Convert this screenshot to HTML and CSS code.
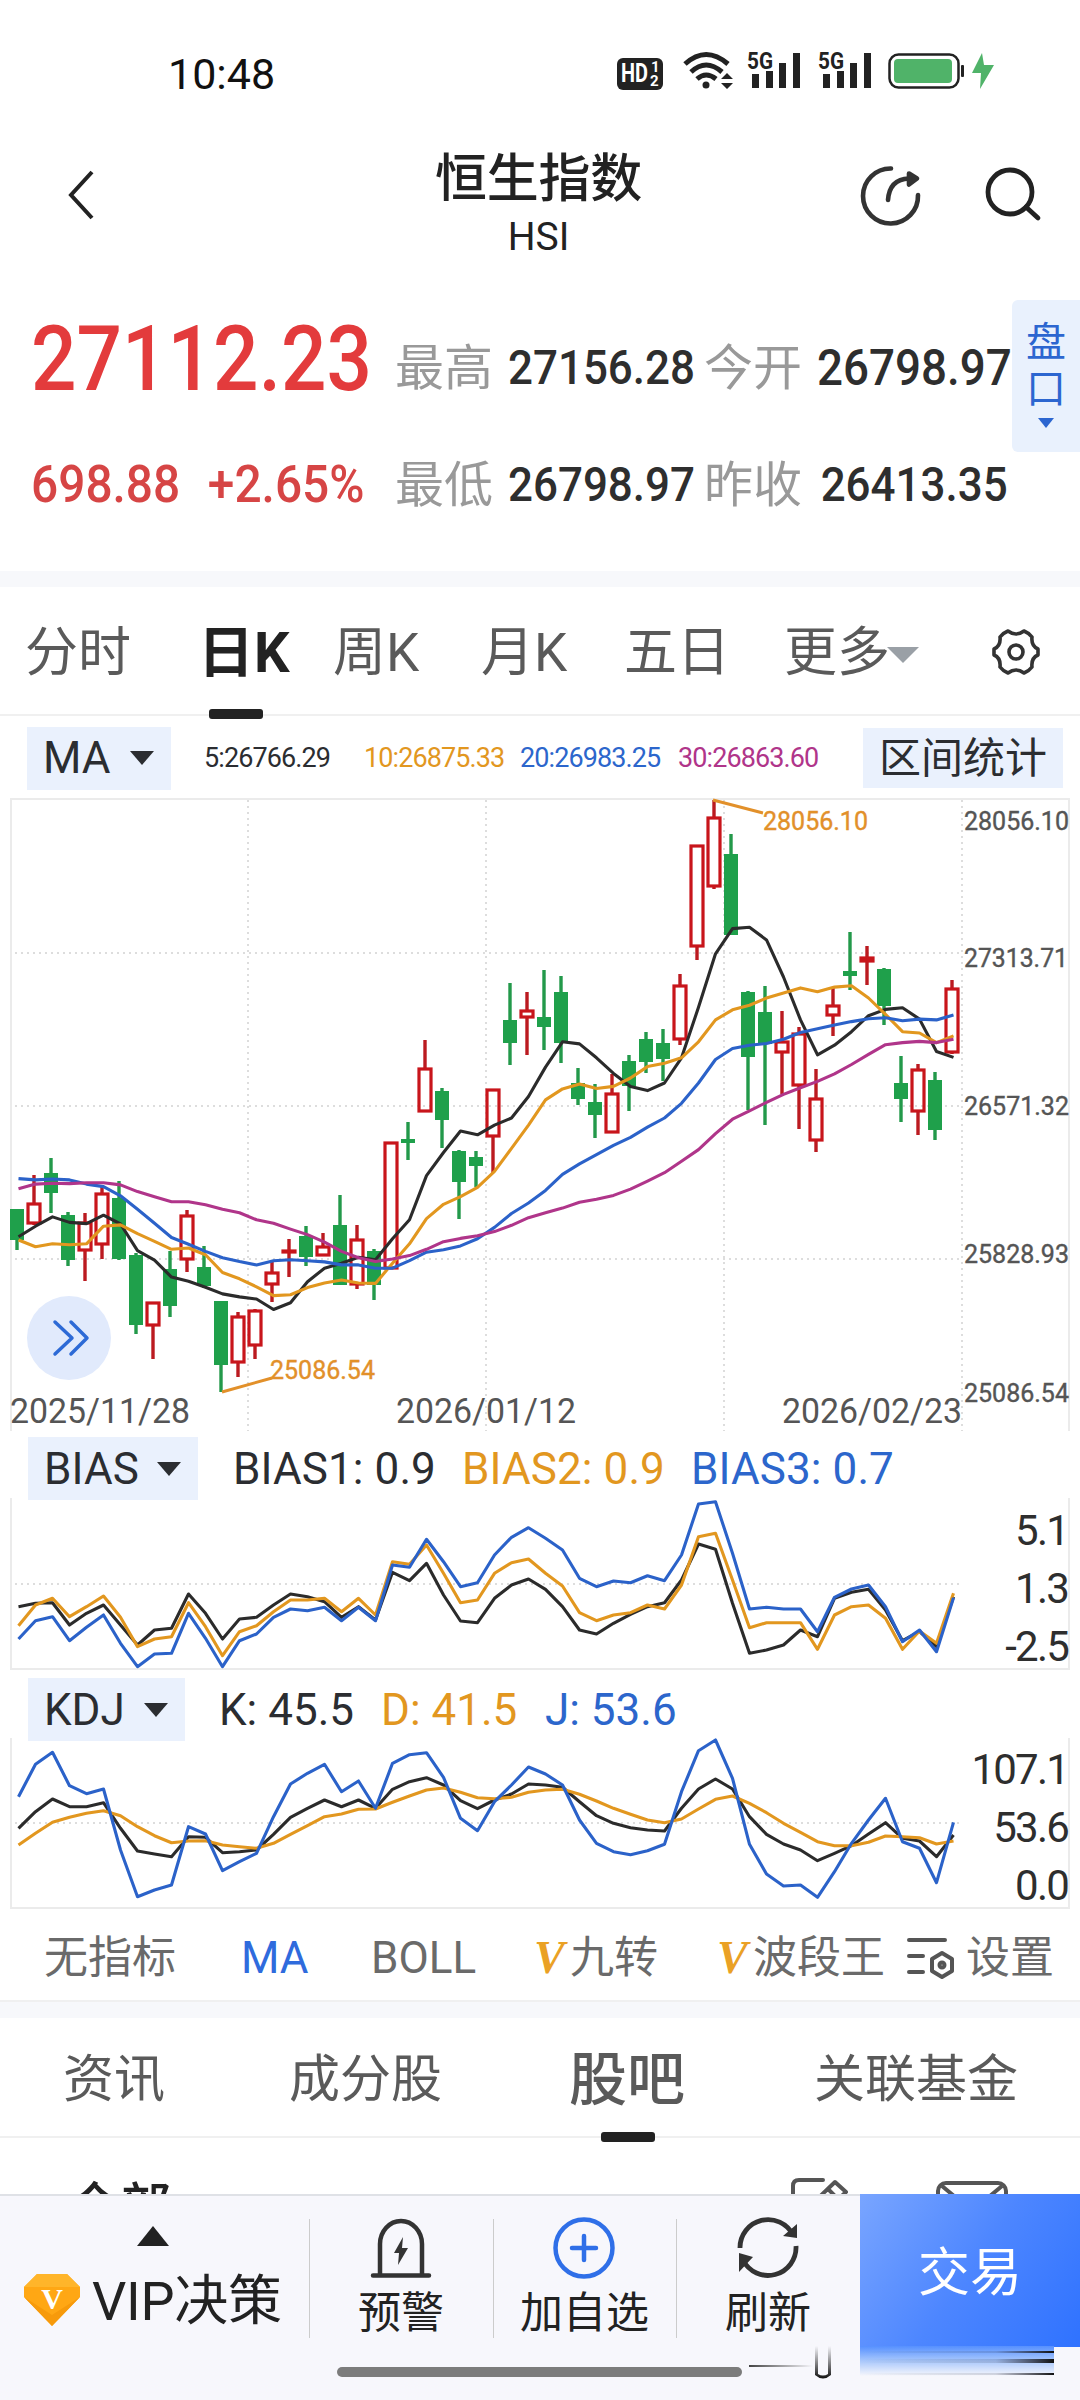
FILE: index.html
```html
<!DOCTYPE html>
<html lang="zh-CN">
<head>
	<meta charset="UTF-8">
	<meta name="viewport" content="width=device-width, initial-scale=1.0">
	<title>恒生指数 HSI</title>
	<link rel="stylesheet" href="styles.css">
</head>
<body>
	<div id="app">
		<div class="status">
			<div class="time">10:48</div>
			<svg class="status-icons" width="400" height="50" viewBox="0 0 400 50">
				<rect x="0" y="10" width="46" height="32" rx="6" fill="#222"/>
				<text x="4" y="34" class="hd" textLength="27" lengthAdjust="spacingAndGlyphs">HD</text>
				<text x="34" y="24" class="hd-s">1</text>
				<text x="33" y="38" class="hd-s">2</text>
				<g fill="none" stroke="#222" stroke-width="5">
					<path d="M68 16Q89 -3 111 16"/>
					<path d="M74 24Q89 10 105 24"/>
					<path d="M80 31Q89 23 99 31"/>
				</g>
				<circle cx="89" cy="37" r="3.5" fill="#222"/>
				<path d="M110 25l6 6h-12zM110 41l6-6h-12z" fill="#222"/>
				<g fill="#222">
					<text x="130" y="21" class="net" textLength="26" lengthAdjust="spacingAndGlyphs">5G</text>
					<rect x="135" y="26" width="7" height="14"/><rect x="149" y="23" width="7" height="17"/><rect x="162" y="15" width="7" height="25"/><rect x="176" y="5" width="7" height="35"/>
					<text x="201" y="21" class="net" textLength="26" lengthAdjust="spacingAndGlyphs">5G</text>
					<rect x="206" y="26" width="7" height="14"/><rect x="220" y="23" width="7" height="17"/><rect x="233" y="15" width="7" height="25"/><rect x="247" y="5" width="7" height="35"/>
				</g>
				<rect x="272.500" y="6.500" width="69" height="33" rx="9" fill="none" stroke="#222" stroke-width="2.500"/>
				<rect x="277" y="11" width="58" height="24" rx="4" fill="#50b369"/>
				<rect x="344" y="17" width="3" height="12" rx="1" fill="#222"/>
				<path d="M365 5l-10 20h9l-1 16 14-24h-10z" fill="#50b369"/>
			</svg>
		</div>

		<div class="header">
			<svg class="back" width="28" height="56" viewBox="0 0 28 56"><path d="M25 5L4 28l21 23" fill="none" stroke="#222" stroke-width="4"/></svg>
			<div class="title">
				<h1>恒生指数</h1>
				<div>HSI</div>
			</div>
			<div class="header-icons">
				<svg width="64" height="64" viewBox="0 0 64 64" fill="none" stroke="#333" stroke-width="4.600" stroke-linecap="round">
					<path d="M32 4.500A27.500 27.500 0 1 0 59 31"/>
					<path d="M29 36C30 22 37 15 50 14.500"/>
					<path d="M50 9.500l8 5-8 6z" fill="#333" stroke-linejoin="round"/>
				</svg>
				<svg width="60" height="64" viewBox="0 0 60 64" fill="none" stroke="#222" stroke-width="4.800" stroke-linecap="round">
					<circle cx="26" cy="28" r="22"/>
					<path d="M42 43l12 11"/>
				</svg>
			</div>
		</div>

		<div class="quote">
			<div class="price">27112.23</div>
			<div class="label">最高</div><div class="num">27156.28</div>
			<div class="label">今开</div><div class="num big">26798.97</div>
			<div class="change"><span>698.88</span><span>+2.65%</span></div>
			<div class="label">最低</div><div class="num">26798.97</div>
			<div class="label">昨收</div><div class="num pad">26413.35</div>
			<div class="side"><div>盘</div><div>口</div><i class="tri"></i></div>
		</div>
		<div class="band"></div>

		<div class="tabs">
			<div>分时</div>
			<div class="active">日K</div>
			<div>周K</div>
			<div>月K</div>
			<div>五日</div>
			<div>更多<i class="tri"></i></div>
			<svg width="52" height="52" viewBox="0 0 52 52" fill="none" stroke="#333" stroke-width="3.600" stroke-linejoin="round">
				<path d="M18 5Q26 11 34 5Q39 7 42 11Q41 20 48 23V29Q41 32 42 41Q39 45 34 47Q26 41 18 47Q13 45 10 41Q11 32 4 29V23Q11 20 10 11Q13 7 18 5z"/>
				<circle cx="26" cy="26" r="7"/>
			</svg>
		</div>

		<div class="ma">
			<div class="select">MA<i class="tri"></i></div>
			<div class="avg">5:26766.29</div>
			<div class="avg orange">10:26875.33</div>
			<div class="avg blue">20:26983.25</div>
			<div class="avg purple">30:26863.60</div>
			<div class="stat">区间统计</div>
		</div>

		<svg id="kline" width="1080" height="633" viewBox="0 0 1080 633">
			<path class="frame" d="M11 633V1H1069V633"/>
			<path class="grid" d="M15 155H962M15 308H962M15 461H962M248 2V633M486 2V633M724 2V633M962 2V633"/>
			<g id="candles"></g>
			<g id="averages"></g>
			<path class="mark" d="M713 2l50 13M222 594l50-14"/>
			<text class="tag" x="763" y="32" textLength="105" lengthAdjust="spacingAndGlyphs">28056.10</text>
			<text class="tag" x="270" y="581" textLength="105" lengthAdjust="spacingAndGlyphs">25086.54</text>
			<text class="axis" x="964" y="32" textLength="105" lengthAdjust="spacingAndGlyphs">28056.10</text>
			<text class="axis" x="964" y="169" textLength="104" lengthAdjust="spacingAndGlyphs">27313.71</text>
			<text class="axis" x="964" y="317" textLength="105" lengthAdjust="spacingAndGlyphs">26571.32</text>
			<text class="axis" x="964" y="465" textLength="105" lengthAdjust="spacingAndGlyphs">25828.93</text>
			<text class="axis" x="964" y="604" textLength="105" lengthAdjust="spacingAndGlyphs">25086.54</text>
			<text class="date" x="10" y="625" textLength="180" lengthAdjust="spacingAndGlyphs">2025/11/28</text>
			<text class="date" x="396" y="625" textLength="180" lengthAdjust="spacingAndGlyphs">2026/01/12</text>
			<text class="date" x="782" y="625" textLength="180" lengthAdjust="spacingAndGlyphs">2026/02/23</text>
			<circle cx="69" cy="540" r="42" fill="#e1eafc"/>
			<path d="M55 524l17 16-17 16M71 524l16 16-16 16" fill="none" stroke="#2d6ad6" stroke-width="3.500" stroke-linecap="round" stroke-linejoin="round"/>
		</svg>

		<div class="indicator bias">
			<div class="select">BIAS<i class="tri"></i></div>
			<div>BIAS1: 0.9</div>
			<div class="orange">BIAS2: 0.9</div>
			<div class="blue">BIAS3: 0.7</div>
		</div>
		<svg id="bias" width="1080" height="172" viewBox="0 0 1080 172">
			<path class="frame" d="M11 0V171H1069V0"/>
			<path class="grid" d="M15 86H962"/>
			<g class="lines"></g>
			<text class="value" x="1068" y="47">5.1</text>
			<text class="value" x="1068" y="105">1.3</text>
			<text class="value" x="1068" y="163">-2.5</text>
		</svg>

		<div class="indicator kdj">
			<div class="select">KDJ<i class="tri"></i></div>
			<div>K: 45.5</div>
			<div class="orange">D: 41.5</div>
			<div class="blue">J: 53.6</div>
		</div>
		<svg id="kdj" width="1080" height="172" viewBox="0 0 1080 172">
			<path class="frame" d="M11 0V170H1069V0"/>
			<path class="grid" d="M15 85H962"/>
			<g class="lines"></g>
			<text class="value" x="1068" y="46">107.1</text>
			<text class="value" x="1068" y="104">53.6</text>
			<text class="value" x="1068" y="162">0.0</text>
		</svg>

		<div class="menu">
			<div>无指标</div>
			<div class="blue">MA</div>
			<div>BOLL</div>
			<div><b>V</b>九转</div>
			<div><b>V</b>波段王</div>
			<svg width="50" height="44" viewBox="0 0 50 44" fill="none" stroke="#555" stroke-width="4" stroke-linecap="round">
				<path d="M3 4h36M3 20h14M3 36h14"/>
				<path d="M36 17l10 6v12l-10 6-10-6V23z" stroke-linejoin="round"/>
				<circle cx="36" cy="29" r="2.500"/>
			</svg>
			<div>设置</div>
		</div>
		<div class="band low"></div>

		<div class="sections">
			<div>资讯</div>
			<div>成分股</div>
			<div class="active">股吧</div>
			<div>关联基金</div>
		</div>

		<div class="feed">
			<div>全部</div>
			<svg width="60" height="48" viewBox="0 0 60 48" fill="none" stroke="#555" stroke-width="4" stroke-linecap="round" stroke-linejoin="round">
				<path d="M33 3H9Q3 3 3 9V46H50V32M45 5l11 10-26 24-12 2 3-13zM38 12l10 10"/>
			</svg>
			<svg width="74" height="48" viewBox="0 0 74 48" fill="none" stroke="#555" stroke-width="4">
				<rect x="3" y="6" width="68" height="50" rx="8"/>
				<path d="M7 9l30 25L67 9"/>
			</svg>
		</div>

		<div class="bottom">
			<div class="vip">
				<i class="tri"></i>
				<div>
					<svg width="56" height="54" viewBox="0 0 56 54">
						<path d="M13 1H43L56 14V24L28 53L0 24V14z" fill="#ffa714"/>
						<path d="M13 1H43L56 14H0z" fill="#ffb52a"/>
						<path d="M0 24L28 42 56 24 28 53z" fill="#f79a0b"/>
						<text x="28" y="36" text-anchor="middle">V</text>
					</svg>
					<span>VIP决策</span>
				</div>
			</div>
			<div class="item">
				<svg width="64" height="64" viewBox="0 0 64 64" fill="none" stroke="#333" stroke-width="4.500" stroke-linecap="round">
					<path d="M11 59V28a21 23 0 0 1 42 0V59M4 59.500H60"/>
					<path d="M34 21L25 37h5l-1 12 10-17h-6z" fill="#333" stroke="none"/>
				</svg>
				<div>预警</div>
			</div>
			<div class="item">
				<svg width="64" height="64" viewBox="0 0 64 64" fill="none" stroke="#2f6fe8" stroke-width="4.500" stroke-linecap="round">
					<circle cx="31" cy="32" r="28.500"/>
					<path d="M19 32H43M31 20V44"/>
				</svg>
				<div>加自选</div>
			</div>
			<div class="item">
				<svg width="64" height="64" viewBox="0 0 64 64" fill="none" stroke="#333" stroke-width="4.800">
					<path d="M4 32A28 28 0 0 1 57 19M60 30A28 28 0 0 1 7 44"/>
					<path d="M61 8V22L47 20zM3 56V37L17 41z" fill="#333" stroke="none"/>
				</svg>
				<div>刷新</div>
			</div>
			<div class="trade">交易</div>
			<div class="home"></div>
			<svg class="smear" width="312" height="38" viewBox="0 0 312 38">
				<defs>
					<linearGradient id="fade" x1="0" y1="0" x2="0" y2="1"><stop offset="0" stop-color="#5690ff"/><stop offset=".5" stop-color="#a9c8fc"/><stop offset="1" stop-color="#f7f7fc"/></linearGradient>
					<linearGradient id="dark" x1="0" y1="0" x2="1" y2="0"><stop offset="0" stop-color="#222" stop-opacity="0"/><stop offset=".7" stop-color="#223" stop-opacity=".15"/><stop offset="1" stop-color="#111"/></linearGradient>
					<linearGradient id="left" x1="0" y1="0" x2="1" y2="0"><stop offset="0" stop-color="#444"/><stop offset="1" stop-color="#444" stop-opacity="0"/></linearGradient>
					<linearGradient id="tube" x1="0" y1="0" x2="0" y2="1"><stop offset="0" stop-color="#222" stop-opacity="0"/><stop offset="1" stop-color="#111"/></linearGradient>
				</defs>
				<rect x="111" y="0" width="194" height="30" fill="url(#fade)"/>
				<rect x="111" y="5" width="194" height="2" fill="url(#dark)"/>
				<rect x="111" y="13" width="194" height="4" fill="url(#dark)"/>
				<rect x="111" y="27" width="194" height="2" fill="url(#dark)"/>
				<rect x="0" y="19" width="64" height="2" fill="url(#left)"/>
				<path d="M66 0V29Q74 36 82 29V0H79V28Q74 31 69 28V0z" fill="url(#tube)"/>
			</svg>
		</div>
	</div>

	<script type="text/javascript">
		var NS = 'http://www.w3.org/2000/svg';
		var step = 17;

		// high, body top, body bottom, low, up (1) or down (0)
		var candles = [
			[411,411,442,452,0],[377,405,426,427,1],[360,375,395,415,0],[414,417,462,468,0],[415,424,453,483,1],
			[389,395,447,461,1],[383,400,461,462,0],[455,457,527,536,0],[504,504,528,561,1],[453,471,508,519,0],
			[412,417,462,474,1],[448,469,488,490,0],[503,503,567,594,0],[514,518,565,579,1],[511,512,548,561,1],
			[464,474,487,504,1],[441,452,455,479,1],[428,438,459,468,0],[435,448,458,458,1],[397,427,487,487,0],
			[427,441,487,491,1],[451,453,487,502,0],[344,344,471,471,1],[324,341,345,362,0],[242,270,314,314,1],
			[290,293,322,350,0],[352,353,384,421,0],[353,359,368,389,0],[291,291,339,375,1],[185,222,245,267,0],
			[194,212,220,257,1],[172,219,229,252,0],[178,194,245,265,0],[270,285,301,307,0],[286,304,317,340,0],
			[276,295,335,335,1],[257,263,288,313,0],[234,241,264,275,0],[231,245,261,283,0],[176,187,242,247,1],
			[47,47,149,162,1],[2,19,89,91,1],[36,56,137,137,0],[193,194,259,312,0],[188,214,246,327,0],
			[213,243,255,296,1],[229,235,288,331,1],[271,300,343,354,1],[190,207,218,238,1],[134,173,178,192,0],
			[148,159,164,187,1],[170,171,208,227,0],[258,285,301,324,0],[266,271,314,337,1],[274,282,332,342,0],
			[182,190,255,256,1]
		];
		var averages = {
			black: [1085,1060,1038,1051,1054,1034,1055,1118,1141,1181,1191,1205,1221,1228,1233,1258,1242,1192,1160,1148,1134,1140,1090,1045,940,885,834,843,820,803,752,682,622,627,660,697,728,738,720,660,540,413,353,350,380,468,570,653,630,598,560,545,541,568,645,659],
			orange: [1093,1109,1102,1104,1102,1060,1057,1078,1096,1115,1112,1128,1170,1185,1204,1225,1223,1206,1195,1188,1195,1196,1148,1102,1042,1008,990,968,930,875,820,760,734,722,733,728,708,681,673,660,622,570,546,535,518,506,494,503,492,489,518,557,598,601,624,608],
			blue: [947,950,948,950,960,966,988,1020,1053,1087,1103,1120,1135,1144,1152,1142,1140,1142,1145,1152,1152,1160,1160,1142,1122,1116,1107,1090,1063,1030,1005,975,937,912,890,868,849,825,803,768,720,664,638,630,626,616,600,591,582,574,567,565,572,568,570,558],
			purple: [971,960,958,959,957,957,962,978,990,1002,1002,1009,1020,1028,1045,1053,1067,1080,1098,1120,1135,1144,1138,1130,1115,1097,1089,1083,1073,1058,1040,1028,1017,1003,996,987,972,953,933,906,878,840,806,786,766,747,731,716,698,676,652,629,624,621,624,616]
		};
		var bias = {
			black: [530,520,518,585,550,525,585,645,600,595,492,550,627,567,562,525,492,500,515,562,530,570,427,452,400,495,573,578,505,465,447,478,530,600,612,580,553,530,518,450,342,358,520,670,660,645,600,620,505,487,478,540,632,605,650,500],
			orange: [587,525,505,560,530,498,562,650,627,620,518,590,677,605,587,545,510,510,505,545,505,555,395,403,345,430,518,510,430,398,387,430,468,548,572,555,548,525,537,465,320,310,450,593,578,578,578,658,555,530,525,565,658,603,640,490],
			blue: [627,572,560,632,592,555,640,710,672,670,550,625,710,632,612,562,537,542,532,572,532,572,405,412,328,395,470,458,375,322,293,325,360,445,470,453,458,437,452,375,222,215,370,537,532,537,537,605,502,477,465,530,635,600,665,503]
		};
		var kdj = {
			black: [475,425,387,410,410,398,475,543,552,560,500,502,548,545,540,493,442,415,390,410,390,415,358,335,323,345,392,416,390,372,342,345,352,395,437,460,473,480,483,415,357,327,357,440,493,522,540,572,550,527,492,458,505,513,560,495],
			orange: [525,490,457,442,430,422,437,470,497,518,513,512,525,530,535,520,493,467,440,432,418,417,397,378,360,354,367,383,386,382,367,360,358,373,393,415,433,450,458,447,417,388,378,400,428,460,487,515,527,527,517,498,500,503,522,513],
			blue: [380,283,247,347,371,357,540,680,660,645,470,492,602,575,550,440,342,310,283,365,333,415,280,254,248,322,445,482,395,345,291,312,345,450,520,545,554,542,523,365,242,210,325,523,612,648,645,682,605,520,450,385,515,535,638,457]
		};

		function add(parent, tag, attrs){
			var el = document.createElementNS(NS, tag);
			for(var key in attrs){
				el.setAttribute(key, attrs[key]);
			}
			parent.appendChild(el);
		}

		function drawLines(parent, data, scale, top){
			for(var name in data){
				var points = data[name].map(function(v, i){
					return (18.5 + i * step) + ',' + (v * scale - top).toFixed(1);
				});
				add(parent, 'polyline', { 'class': 'line ' + name, points: points.join(' ') });
			}
		}

		var box = document.getElementById('candles');
		candles.forEach(function(c, i){
			var x = 17 + i * step;
			var cls = c[4] ? 'up' : 'down';
			add(box, 'path', { 'class': 'wick ' + cls, d: 'M' + x + ' ' + c[0] + 'V' + c[1] + 'M' + x + ' ' + c[2] + 'V' + c[3] });
			if(c[4]){
				add(box, 'rect', { 'class': 'body up', x: x - 6, y: c[1] + 1, width: 12, height: Math.max(c[2] - c[1] - 2, 1) });
			}else{
				add(box, 'rect', { 'class': 'body down', x: x - 7, y: c[1], width: 14, height: c[2] - c[1] });
			}
		});
		drawLines(document.getElementById('averages'), averages, 0.4209, 18);
		drawLines(document.querySelector('#bias .lines'), bias, 1 / 3, 68);
		drawLines(document.querySelector('#kdj .lines'), kdj, 1 / 3, 68);
	</script>
</body>
</html>
```

FILE: styles.css
```css
* { box-sizing: border-box; }
body {
	margin: 0;
	background-color: #fff;
	font-family: Roboto, "Noto Sans CJK SC", sans-serif;
	color: #2b2d31;
}
svg { display: block; flex: none; }
#app {
	position: relative;
	width: 1080px;
	height: 2400px;
	overflow: hidden;
	background-color: #fff;
}
#app div { white-space: nowrap; }
.orange { color: #e2971f; }
.blue { color: #2c66cc; }
.purple { color: #b0358a; }
.tri {
	display: inline-block;
	border: 12px solid transparent;
	border-top: 14px solid #2b2d31;
	border-bottom: 0;
}

.status {
	display: flex;
	height: 110px;
	padding: 48px 0 0 168px;
}
.time {
	width: 449px;
	padding-top: 1px;
	font-size: 43px;
	line-height: 50px;
	color: #111;
}
.hd { font-size: 25px; font-weight: 700; fill: #fff; }
.hd-s { font-size: 15px; font-weight: 700; fill: #fff; }
.net { font-size: 24px; font-weight: 700; }

.header {
	display: flex;
	height: 180px;
	padding-left: 67px;
}
.back { margin-top: 57px; }
.title {
	width: 345px;
	margin-left: 271px;
	text-align: center;
	font-size: 39px;
	line-height: 44px;
	color: #222;
}
.title h1 {
	margin: 40px 0 5px;
	font-size: 52px;
	font-weight: 500;
	line-height: 60px;
	letter-spacing: -0.3px;
}
.header-icons {
	display: flex;
	gap: 61px;
	margin-top: 54px;
	margin-left: 148px;
}

.quote {
	position: relative;
	display: grid;
	grid-template-columns: 364px 113px 196px 113px 230px;
	grid-template-rows: 117px 117px;
	height: 281px;
	padding: 10px 0 0 31px;
	align-items: center;
}
.price {
	font-size: 90px;
	font-weight: 500;
	color: #e33b3c;
	padding-top: 2px;
	transform: scaleX(0.89);
	transform-origin: left;
}
.label {
	font-size: 49px;
	line-height: 60px;
	color: #999;
	padding-top: 20px;
}
.num {
	font-size: 48px;
	color: #2e2e2e;
	padding-top: 18px;
	font-weight: 500;
	transform: scaleX(0.915);
	transform-origin: left;
}
.num.big { font-size: 50px; }
.num.pad { padding-left: 4px; }
.change {
	display: flex;
	gap: 30px;
	padding-top: 18px;
	font-size: 52px;
	font-weight: 500;
	color: #d64545;
	transform: scaleX(0.92);
	transform-origin: left;
}
.side {
	position: absolute;
	top: 10px;
	right: 0;
	width: 68px;
	height: 152px;
	padding-top: 19px;
	border-radius: 6px 0 0 6px;
	background-color: #e9f1fd;
	color: #2c66d0;
	font-size: 40px;
	line-height: 47px;
	text-align: center;
}
.side .tri {
	display: block;
	width: 0;
	margin: 5px auto 0;
	border-width: 10px 8px 0;
	border-top-color: #2c66d0;
}
.band { height: 16px; background-color: #f7f8fb; }

.tabs {
	display: grid;
	grid-template-columns: 173px 135px 148px 143px 160px 206px 52px;
	height: 129px;
	padding-left: 25px;
	border-bottom: 2px solid #f0f0f0;
	font-size: 53px;
	line-height: 132px;
	color: #5a5a5a;
}
.tabs svg { margin-top: 39px; }
.tabs .active {
	position: relative;
	font-size: 56px;
	font-weight: 700;
	color: #222;
}
.tabs .active::after {
	content: "";
	position: absolute;
	left: 11px;
	bottom: 0;
	width: 54px;
	height: 10px;
	border-radius: 3px;
	background-color: #222;
}
.tabs .tri {
	border-width: 16px 16px 0;
	border-top-color: #9aa0a6;
	margin-left: -3px;
	vertical-align: 8px;
}

.ma {
	display: grid;
	grid-template-columns: 177px 160px 156px 158px 185px 200px;
	align-items: center;
	height: 82px;
	padding: 2px 0 0 27px;
}
.select {
	display: flex;
	align-items: center;
	justify-content: space-between;
	height: 63px;
	padding: 0 17px 0 16px;
	background-color: #eaf1fd;
	font-size: 44px;
}
.ma .select { width: 144px; }
.avg {
	font-size: 27px;
	letter-spacing: -0.9px;
}
.stat {
	height: 60px;
	background-color: #eaf1fd;
	font-size: 42px;
	line-height: 62px;
	text-align: center;
}

.frame { fill: none; stroke: #ebebeb; stroke-width: 2; }
.grid { fill: none; stroke: #ddd; stroke-width: 2; stroke-dasharray: 2 4; }
.wick { stroke-width: 3.4; }
.wick.up { stroke: #bb1a20; }
.wick.down { stroke: #23994a; }
.body.up { fill: none; stroke: #c8151b; stroke-width: 3.2; }
.body.down { fill: #1fa04b; }
.line { fill: none; stroke-width: 3.1; stroke-linejoin: round; }
.line.black { stroke: #2b2b2b; }
.line.orange { stroke: #e2971f; }
.line.blue { stroke: #2b62c9; }
.line.purple { stroke: #b0358a; }
.mark { fill: none; stroke: #e2902a; stroke-width: 3; }
.tag { font-size: 26px; fill: #e2902a; stroke: #e2902a; stroke-width: 0.4; }
.axis { font-size: 26px; fill: #555; stroke: #555; stroke-width: 0.4; }
.date { font-size: 35px; fill: #555; }
.value {
	font-size: 42px;
	fill: #2e2e2e;
	text-anchor: end;
	letter-spacing: -1.8px;
}

.indicator {
	display: grid;
	align-items: center;
	height: 67px;
	padding: 0 0 0 28px;
	font-size: 44px;
	line-height: 50px;
}
.bias { grid-template-columns: 205px 229px 229px 229px; padding-top: 6px; letter-spacing: 0.1px; }
.kdj { grid-template-columns: 191px 162px 164px 200px; height: 68px; padding-top: 8px; }
.bias .select { width: 170px; }
.kdj .select { width: 157px; }

.menu {
	display: grid;
	grid-template-columns: 197px 130px 163px 183px 189px 60px 120px;
	align-items: center;
	height: 90px;
	padding: 5px 0 0 44px;
	font-size: 44px;
	color: #6a6a6a;
	line-height: 60px;
}
.menu .blue { color: #2f6bdd; }
.menu b {
	display: inline-block;
	width: 36px;
	font-family: "Liberation Serif", serif;
	font-style: italic;
	font-weight: 700;
	font-size: 46px;
	line-height: 50px;
	color: #eaa125;
}
.band.low { height: 18px; border-top: 2px solid #f0f0f0; }

.sections {
	display: grid;
	grid-template-columns: 226px 280px 245px 220px;
	height: 120px;
	padding-left: 63px;
	border-bottom: 2px solid #f0f0f0;
	font-size: 51px;
	line-height: 124px;
	color: #5a5a5a;
}
.sections .active {
	position: relative;
	font-size: 58px;
	font-weight: 500;
}
.sections .active::after {
	content: "";
	position: absolute;
	left: 32px;
	bottom: 0;
	width: 54px;
	height: 10px;
	border-radius: 3px;
	background-color: #222;
}

.feed {
	display: grid;
	grid-template-columns: 721px 145px 80px;
	height: 56px;
	padding: 39px 0 0 69px;
	overflow: hidden;
	font-size: 51px;
	font-weight: 500;
	line-height: 62px;
	color: #222;
}

.bottom {
	position: relative;
	display: grid;
	grid-template-columns: 309px 184px 183px 184px 220px;
	height: 207px;
	border-top: 2px solid #dfe1e6;
	background-color: #f7f7fc;
	color: #222;
}
.vip .tri {
	display: block;
	width: 0;
	margin: 30px 0 0 137px;
	border-width: 0 16px 20px;
	border-color: transparent transparent #222;
	border-style: solid;
}
.vip div {
	display: flex;
	align-items: center;
	gap: 12px;
	margin-top: 20px;
	padding-left: 24px;
	font-size: 54px;
	line-height: 72px;
	letter-spacing: -0.3px;
}
.vip svg { margin-top: -4px; }
.vip text {
	font: bold 30px "Liberation Serif", serif;
	fill: #fff;
}
.item {
	position: relative;
	display: flex;
	flex-direction: column;
	align-items: center;
	padding-top: 20px;
	font-size: 43px;
	line-height: 66px;
}
.item::before {
	content: "";
	position: absolute;
	left: 0;
	top: 23px;
	width: 1px;
	height: 119px;
	background-color: #ccc;
}
.trade {
	height: 153px;
	margin-top: -2px;
	background: linear-gradient(125deg, #79a5ff 0%, #4d86ff 50%, #2f72ff 100%);
	color: #fff;
	font-size: 52px;
	line-height: 160px;
	text-align: center;
}
.home {
	position: absolute;
	left: 337px;
	top: 171px;
	width: 405px;
	height: 10px;
	border-radius: 5px;
	background-color: #7c7c7c;
}
.smear {
	position: absolute;
	left: 749px;
	top: 150px;
}
```
